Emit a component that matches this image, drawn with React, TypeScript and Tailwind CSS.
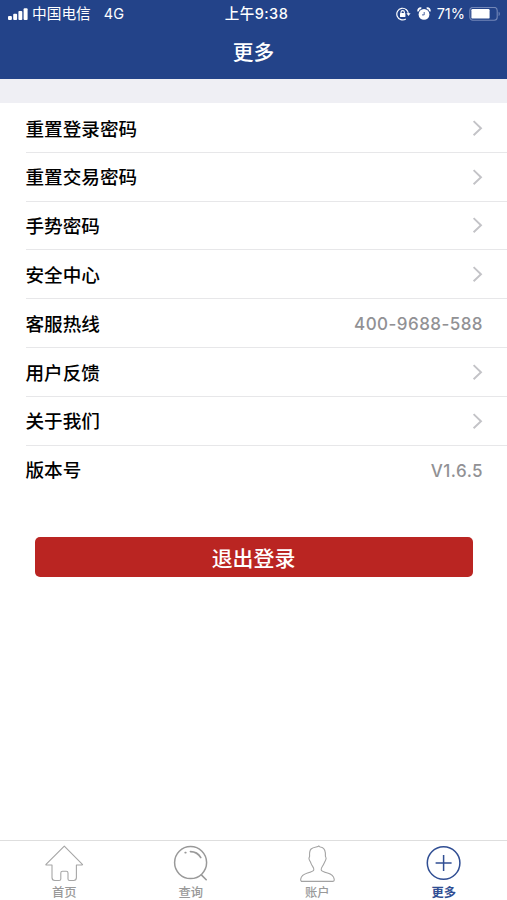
import React from "react";

type Row = { label: string; value?: string };

const rows: Row[] = [
  { label: "重置登录密码" },
  { label: "重置交易密码" },
  { label: "手势密码" },
  { label: "安全中心" },
  { label: "客服热线", value: "400-9688-588" },
  { label: "用户反馈" },
  { label: "关于我们" },
  { label: "版本号", value: "V1.6.5" },
];

function StatusBar() {
  return (
    <div className="grid h-7 grid-cols-3 items-center pl-2 pr-[6px] text-[14.5px] leading-7">
      <div className="flex items-center">
        <svg width="20" height="13" viewBox="0 0 20 13" fill="#fff">
          <rect x="0" y="8" width="3.9" height="4" rx="1" />
          <rect x="5.2" y="5.8" width="3.9" height="6.2" rx="1" />
          <rect x="10.4" y="3" width="3.9" height="9" rx="1" />
          <rect x="15.6" y="0.2" width="4" height="11.8" rx="1" />
        </svg>
        <span className="ml-1 whitespace-nowrap text-[14.7px]">中国电信</span>
        <span className="ml-[13px] text-[14.5px]">4G</span>
      </div>
      <div className="pl-[4px] text-center font-medium tracking-[0.45px]">上午9:38</div>
      <div className="flex items-center justify-end">
        <svg width="15" height="14" viewBox="0 0 15 14" fill="none" stroke="#fff">
          <path d="M9.8 11.9A5.8 5.8 0 1 1 12.4 7.3" strokeWidth="1.2" />
          <path d="M10.4 6.2h4.2l-2.1 2.9z" fill="#fff" stroke="none" />
          <rect x="4" y="6.1" width="5.4" height="4" rx="0.6" fill="#fff" stroke="none" />
          <path d="M5 6.5V5.3a1.7 1.7 0 0 1 3.4 0v1.2" strokeWidth="1.1" />
        </svg>
        <svg className="ml-[6px]" width="14" height="14" viewBox="0 0 14 14" fill="none">
          <circle cx="7" cy="7.4" r="5.4" fill="#fff" />
          <path d="M1.4 4.4a2.3 2.3 0 0 1 2.9-3M12.6 4.4a2.3 2.3 0 0 0-2.9-3" stroke="#fff" strokeWidth="1.8" />
          <path d="M7.2 5v2.9H5" stroke="#234389" strokeWidth="0.8" />
        </svg>
        <span className="ml-[6px] text-[14.5px]">71%</span>
        <svg className="ml-1" width="32" height="15" viewBox="0 0 32 15" fill="none">
          <rect x="0.8" y="0.4" width="27.4" height="12.8" rx="3" stroke="#7387b8" strokeWidth="1.1" />
          <rect x="2.4" y="2" width="18.2" height="9.6" rx="1.2" fill="#fff" />
          <path d="M29.6 4.7c1.6.5 1.6 3.7 0 4.2z" fill="#7387b8" />
        </svg>
      </div>
    </div>
  );
}

function Chevron() {
  return (
    <svg width="12" height="18" viewBox="0 0 12 18" fill="none" stroke="#c3c3c7" strokeWidth="1.9">
      <path d="M2.6 2.1l7.4 7.1-7.4 7.1" />
    </svg>
  );
}

const HomeIcon = () => (
  <svg width="40" height="38" viewBox="0 0 40 38" fill="none" stroke="#a6a6a6" strokeWidth="1.1" strokeLinejoin="round">
    <path d="M20.3 1.2 2 19.3q-.4.7.5.7H8v12.5q0 3 2.8 3h4.4q1.6 0 1.6-1.6v-6q0-1.7 1.7-1.7h3.8q1.7 0 1.7 1.7v6q0 1.6 1.6 1.6h4q2.8 0 2.8-3V20H38q.9 0 .4-.7Z" />
  </svg>
);

const SearchIcon = () => (
  <svg width="40" height="38" viewBox="0 0 40 38" fill="none" stroke="#999" strokeLinecap="round">
    <circle cx="19.6" cy="17.6" r="16" strokeWidth="1.5" />
    <path d="M30.6 30.1l4.6 4.6" strokeWidth="1.6" />
    <path d="M19.4 6.6c4.6 0 8.2 2.2 10.4 6" strokeWidth="1.6" />
    <path d="M14.2 7.6h.6" strokeWidth="1.7" />
  </svg>
);

const UserIcon = () => (
  <svg width="40" height="38" viewBox="0 0 40 38" fill="none" stroke="#a3a3a3" strokeWidth="1.1" strokeLinejoin="round">
    <path d="M4.5 36.4h31q2 0 1.7-2.3c-.5-3.4-3-5-6.7-6.1-3.6-1-6-1.8-6.3-3.2-.4-2.2 1.8-3.6 3-6.8.3-1 1.7-2.7 1.9-4.5.1-1-.7-1.6-.7-2.5.2-4.2-.2-7.3-3.2-8.5-1-.4-2.5-.2-3.3-1.6-.9 1.2-5.5.9-7.8 3.1-1.8 1.8-1.7 4.3-1.5 7 .1 1-.8 1.6-.6 2.7.2 1.6 1.5 3 1.9 4.4 1.1 3.2 3.4 4.5 2.9 6.7-.4 1.5-2.7 2.2-6.3 3.2-3.7 1.1-6.3 2.7-6.8 6.1q-.3 2.3 1.8 2.3Z" />
  </svg>
);

const PlusIcon = () => (
  <svg width="40" height="38" viewBox="0 0 40 38" fill="none" stroke="#304e93">
    <circle cx="19.6" cy="18" r="16.3" strokeWidth="1.5" />
    <path d="M19.6 10v16M11.6 18h16" strokeWidth="1.5" />
  </svg>
);

const tabs = [
  { label: "首页", Icon: HomeIcon },
  { label: "查询", Icon: SearchIcon },
  { label: "账户", Icon: UserIcon },
  { label: "更多", Icon: PlusIcon, active: true },
];

export default function App() {
  return (
    <div className="flex h-[900px] w-[507px] flex-col overflow-hidden bg-white font-['Inter','Noto_Sans_CJK_SC',sans-serif]">
      <header className="h-[79px] shrink-0 bg-[#234389] text-white">
        <StatusBar />
        <h1 className="h-[50px] text-center text-[20.7px] font-medium leading-[50px]">更多</h1>
      </header>
      <div className="h-6 shrink-0 bg-[#efeff4]" />
      <main className="flex-1 pt-[0.9px]">
        <ul className="pl-[25.5px]">
          {rows.map((row) => (
            <li
              key={row.label}
              className="flex h-[48.84px] items-center justify-between border-b border-[#e7e7e9] pr-[24px] last:border-transparent"
            >
              <span className="pt-[2px] text-[18.6px] font-medium leading-none text-black">{row.label}</span>
              {row.value ? (
                <span className="pt-[3px] text-[17px] font-medium leading-none tracking-[0.45px] text-[#919194]">
                  {row.value}
                </span>
              ) : (
                <Chevron />
              )}
            </li>
          ))}
        </ul>
        <button className="mx-[35px] mt-[42.4px] block h-10 w-[438px] rounded-[5px] bg-[#ba2522] pr-px pt-px text-[20.9px] font-medium leading-[41px] text-white">
          退出登录
        </button>
      </main>
      <nav className="grid h-[60px] shrink-0 grid-cols-4 border-t border-[#dedede] pl-px">
        {tabs.map(({ label, Icon, active }) => (
          <div
            key={label}
            className={
              active
                ? "flex flex-col items-center gap-px pt-1 text-[12.3px] font-bold leading-[18px] text-[#304e93]"
                : "flex flex-col items-center gap-px pt-1 text-[12.3px] font-medium leading-[18px] text-[#999]"
            }
          >
            <Icon />
            <span>{label}</span>
          </div>
        ))}
      </nav>
    </div>
  );
}
